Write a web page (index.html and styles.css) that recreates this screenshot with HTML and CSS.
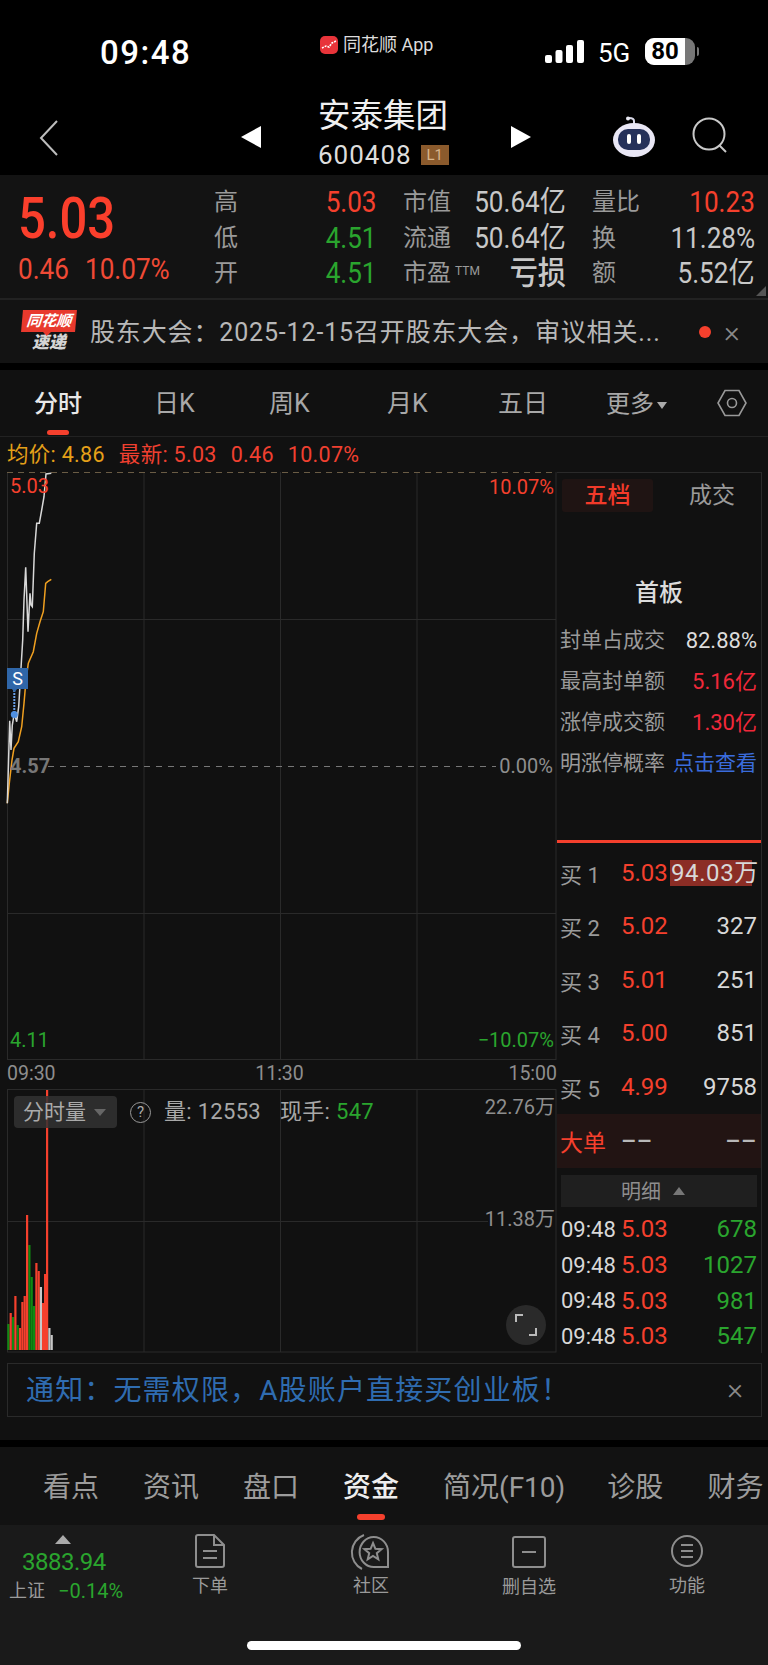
FILE: index.html
```html
<!DOCTYPE html>
<html lang="zh-CN">
<head>
    <meta charset="UTF-8">
    <title>安泰集团 600408</title>
    <link rel="stylesheet" href="styles.css">
</head>
<body>
    <div class="top">
        <div class="status">
            <span class="clock">09:48</span>
            <span class="source">
                <svg class="source-icon" width="18" height="18" viewBox="0 0 18 18"><rect width="18" height="18" rx="5" fill="#e8343a"/><polyline points="2,12 6,10 9,11 12,7 16,5" fill="none" stroke="#fff" stroke-width="1.6" stroke-dasharray="2 1"/></svg>
                同花顺 App
            </span>
            <svg class="signal" width="39" height="23" viewBox="0 0 39 23"><rect x="0" y="15" width="7" height="8" rx="2"/><rect x="10.5" y="10" width="7" height="13" rx="2"/><rect x="21" y="5" width="7" height="18" rx="2"/><rect x="32" y="0" width="7" height="23" rx="2"/></svg>
            <span class="net">5G</span>
            <span class="battery"><span class="battery-fill">80</span></span>
            <span class="battery-tip"></span>
        </div>
        <div class="nav">
            <svg class="back" width="20" height="36" viewBox="0 0 20 36"><polyline points="18,1 2,18 18,35" fill="none" stroke="#bdbdbd" stroke-width="2"/></svg>
            <span class="arrow arrow-left"></span>
            <div class="title">
                <div class="name">安泰集团</div>
                <div class="code">600408<span class="level">L1</span></div>
            </div>
            <span class="arrow arrow-right"></span>
            <svg class="robot" width="44" height="42" viewBox="0 0 44 42">
                <path d="M22 9 V5 Q22 2 17 2" fill="none" stroke="#d9d9e8" stroke-width="2"/>
                <circle cx="16" cy="2.5" r="2" fill="#e8e8f2"/>
                <ellipse cx="22" cy="24" rx="21" ry="17" fill="#e9e7f5"/>
                <rect x="6" y="13" width="32" height="21" rx="10" fill="#25315a"/>
                <rect x="15" y="18" width="4" height="10" rx="2" fill="#fff"/>
                <rect x="25" y="18" width="4" height="10" rx="2" fill="#fff"/>
            </svg>
            <svg class="search" width="36" height="36" viewBox="0 0 36 36"><circle cx="17" cy="17" r="15.5" fill="none" stroke="#c8c8c8" stroke-width="2"/><line x1="27" y1="28" x2="34" y2="35" stroke="#c8c8c8" stroke-width="2"/></svg>
        </div>
    </div>

    <div class="quote">
        <div class="price">
            <div class="price-big">5.03</div>
            <div class="price-change"><span class="narrow-left">0.46</span><span class="narrow-left">10.07%</span></div>
        </div>
        <div class="stats">
            <div class="stat"><span class="stat-label">高</span><span class="narrow up">5.03</span></div>
            <div class="stat"><span class="stat-label">市值</span><span class="narrow">50.64亿</span></div>
            <div class="stat"><span class="stat-label">量比</span><span class="narrow up">10.23</span></div>
            <div class="stat"><span class="stat-label">低</span><span class="narrow down">4.51</span></div>
            <div class="stat"><span class="stat-label">流通</span><span class="narrow">50.64亿</span></div>
            <div class="stat"><span class="stat-label">换</span><span class="narrow">11.28%</span></div>
            <div class="stat"><span class="stat-label">开</span><span class="narrow down">4.51</span></div>
            <div class="stat"><span class="stat-label">市盈<sup class="ttm">TTM</sup></span><span class="narrow stat-loss">亏损</span></div>
            <div class="stat"><span class="stat-label">额</span><span class="narrow">5.52亿</span></div>
        </div>
        <span class="corner"></span>
    </div>

    <div class="news">
        <div class="news-logo">
            <div class="news-logo-top">同花顺</div>
            <div class="news-logo-bottom">速递</div>
        </div>
        <div class="news-text">股东大会：2025-12-15召开股东大会，审议相关...</div>
        <span class="news-dot"></span>
        <span class="news-close">×</span>
    </div>

    <div class="panel">
        <div class="chart-tabs">
            <span class="chart-tab tab-active">分时</span>
            <span class="chart-tab tab-day">日K</span>
            <span class="chart-tab tab-week">周K</span>
            <span class="chart-tab tab-month">月K</span>
            <span class="chart-tab tab-five">五日</span>
            <span class="chart-tab tab-more">更多<i class="more-caret"></i></span>
            <svg class="hex" width="32" height="28" viewBox="0 0 32 28"><polygon points="9,1.5 23,1.5 30,14 23,26.5 9,26.5 2,14" fill="none" stroke="#999" stroke-width="1.6"/><circle cx="16" cy="14" r="4.5" fill="none" stroke="#999" stroke-width="1.6"/></svg>
        </div>
        <div class="legend">
            <span class="avg">均价: 4.86</span>
            <span class="latest">最新: 5.03</span>
            <span class="latest">0.46</span>
            <span class="latest">10.07%</span>
        </div>

        <div class="main">
            <div class="charts">
                <div class="price-chart">
                    <svg class="plot" width="550" height="589" viewBox="7 472 550 589">
                        <g class="grid">
                            <line x1="7.5" y1="472" x2="7.5" y2="1060"/>
                            <line x1="144" y1="472" x2="144" y2="1060"/>
                            <line x1="280.5" y1="472" x2="280.5" y2="1060"/>
                            <line x1="417" y1="472" x2="417" y2="1060"/>
                            <line x1="556" y1="472" x2="556" y2="1060"/>
                            <line x1="7" y1="619.5" x2="556" y2="619.5"/>
                            <line x1="7" y1="913.5" x2="556" y2="913.5"/>
                            <line x1="7" y1="1059.5" x2="556" y2="1059.5"/>
                        </g>
                        <line class="limit" x1="7" y1="472.5" x2="556" y2="472.5"/>
                        <line class="base" x1="48" y1="766.5" x2="496" y2="766.5"/>
                        <polyline class="line-avg" points="7.3,803.3 9.3,783.3 12,760 14,748.3 18.3,741.7 21.7,726.7 24,703.3 26,680 28.3,663.3 33.3,651.7 36.7,633.3 40,621.7 43.3,611.7 45.7,583.3 47.7,581.7 51.3,579.3"/>
                        <polyline class="line-price" points="7.3,803.3 8,780 9.7,720.7 11,750 12.3,725 14.3,713.3 16.7,721.7 18.7,706.7 20.7,673.3 22.7,640 24,600 25.7,567.3 28,631.7 30,593.3 31,605 32.3,606.7 34.3,553.3 36.7,523.3 39.3,523.3 41.7,510 44,496.7 46,474 51.3,473.3"/>
                        <line class="sell-stem" x1="14.3" y1="690" x2="14.3" y2="712"/>
                        <circle class="sell-dot" cx="14.3" cy="714.5" r="3.5"/>
                        <polygon class="sell-tip" points="11,688 18,688 14.5,692"/>
                    </svg>
                    <span class="sell-flag">S</span>
                    <span class="axis axis-top up">5.03</span>
                    <span class="axis axis-pct-top up">10.07%</span>
                    <span class="axis axis-mid">4.57</span>
                    <span class="axis axis-pct-mid">0.00%</span>
                    <span class="axis axis-low down">4.11</span>
                    <span class="axis axis-pct-low down">−10.07%</span>
                </div>
                <div class="times"><span>09:30</span><span class="time-mid">11:30</span><span>15:00</span></div>
                <div class="volume-chart">
                    <svg class="plot" width="550" height="264" viewBox="7 1089 550 264">
                        <g class="grid">
                            <rect x="7.5" y="1089.5" width="548.5" height="262.5" fill="none"/>
                            <line x1="144" y1="1089" x2="144" y2="1352"/>
                            <line x1="280.5" y1="1089" x2="280.5" y2="1352"/>
                            <line x1="417" y1="1089" x2="417" y2="1352"/>
                            <line x1="7" y1="1221.5" x2="488" y2="1221.5"/>
                        </g>
                        <g class="bar-green">
                            <rect x="7.3" y="1324" width="2.2" height="26"/>
                            <rect x="12" y="1317" width="2.2" height="33"/>
                            <rect x="16.6" y="1325" width="2.2" height="25"/>
                            <rect x="28.3" y="1245" width="2.2" height="105"/>
                            <rect x="30.6" y="1277" width="2.2" height="73"/>
                            <rect x="33" y="1306" width="2.2" height="44"/>
                        </g>
                        <g class="bar-red">
                            <rect x="9.6" y="1313" width="2.2" height="37"/>
                            <rect x="14.3" y="1296" width="2.2" height="54"/>
                            <rect x="19" y="1328" width="2.2" height="22"/>
                            <rect x="21.3" y="1302" width="2.2" height="48"/>
                            <rect x="23.6" y="1296" width="2.2" height="54"/>
                            <rect x="26" y="1215" width="2.2" height="135"/>
                            <rect x="35.3" y="1263" width="2.2" height="87"/>
                            <rect x="37.6" y="1271" width="2.2" height="79"/>
                            <rect x="42" y="1303" width="2.2" height="47"/>
                            <rect x="44" y="1274" width="2.2" height="76"/>
                            <rect x="46" y="1090" width="2.2" height="260"/>
                        </g>
                        <g class="bar-grey">
                            <rect x="39.8" y="1287" width="2.2" height="63"/>
                            <rect x="48.3" y="1328" width="2.2" height="22"/>
                            <rect x="50.6" y="1335" width="2.2" height="15"/>
                        </g>
                    </svg>
                    <div class="vol-info">
                        <span class="vol-pill">分时量<i class="pill-caret"></i></span>
                        <span class="vol-help">?</span>
                        <span class="vol-text">量: 12553</span>
                        <span class="vol-text vol-hand">现手: <span class="down">547</span></span>
                    </div>
                    <span class="axis axis-vol-top">22.76万</span>
                    <span class="axis axis-vol-mid">11.38万</span>
                    <span class="expand">
                        <svg width="24" height="24" viewBox="0 0 24 24"><polyline points="2,9 2,2 9,2" fill="none" stroke="#bbb" stroke-width="2"/><polyline points="22,15 22,22 15,22" fill="none" stroke="#bbb" stroke-width="2"/></svg>
                    </span>
                </div>
            </div>

            <div class="side">
                <div class="side-tabs"><span class="side-tab side-on">五档</span><span class="side-tab">成交</span></div>
                <div class="board-title">首板</div>
                <div class="board-row"><span>封单占成交</span><span class="board-white">82.88%</span></div>
                <div class="board-row"><span>最高封单额</span><span class="board-red">5.16亿</span></div>
                <div class="board-row"><span>涨停成交额</span><span class="board-red">1.30亿</span></div>
                <div class="board-row"><span>明涨停概率</span><span class="board-blue">点击查看</span></div>
                <div class="bids">
                    <div class="bid"><span class="bid-name">买 1</span><span class="up">5.03</span><span class="bid-vol bid-hot">94.03万</span></div>
                    <div class="bid"><span class="bid-name">买 2</span><span class="up">5.02</span><span class="bid-vol">327</span></div>
                    <div class="bid"><span class="bid-name">买 3</span><span class="up">5.01</span><span class="bid-vol">251</span></div>
                    <div class="bid"><span class="bid-name">买 4</span><span class="up">5.00</span><span class="bid-vol">851</span></div>
                    <div class="bid"><span class="bid-name">买 5</span><span class="up">4.99</span><span class="bid-vol">9758</span></div>
                </div>
                <div class="big-order"><span class="big-name">大单</span><span class="big-dash">--</span><span class="bid-vol big-dash dash-right">--</span></div>
                <div class="detail-head">明细<i class="detail-caret"></i></div>
                <div class="trade"><span class="trade-time">09:48</span><span class="up">5.03</span><span class="bid-vol down">678</span></div>
                <div class="trade"><span class="trade-time">09:48</span><span class="up">5.03</span><span class="bid-vol down">1027</span></div>
                <div class="trade"><span class="trade-time">09:48</span><span class="up">5.03</span><span class="bid-vol down">981</span></div>
                <div class="trade"><span class="trade-time">09:48</span><span class="up">5.03</span><span class="bid-vol down">547</span></div>
            </div>
        </div>

        <div class="notice">
            <span class="notice-text">通知：无需权限，A股账户直接买创业板！</span>
            <span class="notice-close">×</span>
        </div>
    </div>

    <div class="info-tabs">
        <span class="info-tab">看点</span>
        <span class="info-tab">资讯</span>
        <span class="info-tab">盘口</span>
        <span class="info-tab info-on">资金</span>
        <span class="info-tab info-f10">简况(F10)</span>
        <span class="info-tab">诊股</span>
        <span class="info-tab">财务</span>
    </div>

    <div class="toolbar">
        <div class="index">
            <span class="index-arrow"></span>
            <div class="index-value">3883.94</div>
            <div class="index-line"><span class="index-name">上证</span><span>−0.14%</span></div>
        </div>
        <div class="tool tool-order">
            <svg width="32" height="34" viewBox="0 0 32 34"><path d="M2 3 Q2 1 4 1 H20 L30 11 V31 Q30 33 28 33 H4 Q2 33 2 31 Z M20 1 V11 H30" fill="none"/><line x1="9" y1="17" x2="23" y2="17"/><line x1="9" y1="24" x2="23" y2="24"/></svg>
            <span>下单</span>
        </div>
        <div class="tool tool-community">
            <svg width="38" height="36" viewBox="0 0 38 36"><path d="M36 33 H22 A14.200 15 0 1 1 36 18 Z" fill="none"/><path d="M12 1 A18.600 18.600 0 0 0 10 35" fill="none"/><polygon points="21,9 23.400,14.800 29.600,15.200 24.800,19.200 26.300,25.300 21,22 15.700,25.300 17.200,19.200 12.400,15.200 18.600,14.800" fill="none"/></svg>
            <span>社区</span>
        </div>
        <div class="tool tool-remove">
            <svg width="34" height="32" viewBox="0 0 34 32"><rect x="1" y="1" width="32" height="30" rx="2" fill="none"/><line x1="10" y1="16" x2="24" y2="16"/></svg>
            <span>删自选</span>
        </div>
        <div class="tool tool-more">
            <svg width="32" height="34" viewBox="0 0 32 34"><circle cx="16" cy="17" r="15" fill="none"/><line x1="10" y1="11" x2="22" y2="11"/><line x1="10" y1="17" x2="22" y2="17"/><line x1="10" y1="23" x2="22" y2="23"/></svg>
            <span>功能</span>
        </div>
        <span class="home-bar"></span>
    </div>
</body>
</html>
```

FILE: styles.css
```css
* { box-sizing: border-box; }
html, body { margin: 0; padding: 0; }
body { width: 768px; height: 1665px; overflow: hidden; background: #000; color: #d0d0d0; font-family: Roboto, "Noto Sans CJK SC", sans-serif; }
i { display: inline-block; font-style: normal; }

/* status + nav */
.top { height: 175px; background: #000; color: #fff; }
.status { height: 90px; display: flex; align-items: flex-start; position: relative; }
.clock { margin: 32px 0 0 100px; width: 220px; font-size: 33px; font-weight: 500; line-height: 41px; letter-spacing: 1.5px; }
.source { display: flex; align-items: center; gap: 5px; margin-top: 36px; width: 225px; font-size: 18px; line-height: 18px; color: #ddd; }
.signal { margin-top: 40px; fill: #fff; }
.net { margin: 38px 0 0 14px; width: 47px; font-size: 26px; line-height: 30px; }
.battery { margin-top: 38px; width: 50px; height: 27px; border-radius: 9px; background: #777; overflow: hidden; }
.battery-fill { display: block; width: 40px; height: 27px; background: #fff; color: #000; font-size: 24px; font-weight: 700; line-height: 27px; text-align: center; }
.battery-tip { margin: 47px 0 0 2px; width: 2px; height: 9px; border-radius: 0 2px 2px 0; background: #777; }

.nav { height: 85px; display: flex; align-items: center; position: relative; }
.back { margin: 10px 0 0 39px; }
.arrow { width: 0; height: 0; margin-top: 8px; border-top: 11px solid transparent; border-bottom: 11px solid transparent; }
.arrow-left { margin-left: 182px; border-right: 20px solid #fff; }
.arrow-right { margin-left: 60px; border-left: 20px solid #fff; }
.title { margin: 4px 0 0 57px; width: 133px; }
.name { font-size: 32.500px; line-height: 42px; color: #f0f0f0; margin-top: -4px; }
.code { display: flex; align-items: center; margin-top: 3px; font-size: 26px; letter-spacing: 1px; line-height: 30px; color: #ddd; }
.level { margin-left: 9px; width: 28px; height: 20px; background: #8b5a2c; color: #d8b48a; font-size: 15px; letter-spacing: 0; line-height: 20px; text-align: center; }
.robot { margin: 8px 0 0 81px; }
.search { margin: 4px 0 0 36px; }

/* quote */
.quote { height: 125px; display: flex; position: relative; background: #131313; border-bottom: 2px solid #222; }
.price { width: 214px; padding-left: 18px; }
.price-big { margin-top: 14px; font-size: 57px; font-weight: 500; line-height: 60px; color: #fb3f2c; transform: scaleX(.86); transform-origin: left center; }
.price-change { display: flex; gap: 8px; margin-top: 2px; font-size: 30px; line-height: 36px; color: #f04a36; }
.narrow-left { display: inline-block; transform: scaleX(.87); transform-origin: left center; }
.stats { display: grid; grid-template-columns: repeat(3, 163px); column-gap: 26px; grid-auto-rows: 35.5px; padding-top: 10px; font-size: 29px; color: #c8c8c8; }
.stat { display: flex; justify-content: space-between; align-items: center; line-height: 35px; white-space: nowrap; }
.stat-label { font-size: 24px; color: #9a9a9a; }
.narrow { display: inline-block; transform: scaleX(.9); transform-origin: right center; }
.stat-loss { font-size: 32px; font-weight: 500; transform: scaleX(.88); }
.ttm { margin-left: 4px; font-size: 12px; vertical-align: 6px; line-height: 0; }
.corner { position: absolute; right: 2px; bottom: 2px; width: 0; height: 0; border-left: 10px solid transparent; border-bottom: 10px solid #555; }

/* news */
.news { height: 63px; display: flex; align-items: center; background: #131313; }
.news-logo { margin-left: 22px; width: 54px; text-align: center; position: relative; }
.news-logo-top { height: 22px; background: #e8392d; color: #fff; font-size: 15px; font-weight: 700; font-style: italic; line-height: 22px; transform: skewX(-5deg); }
.news-logo-top::after { content: ""; position: absolute; left: 22px; top: 22px; border-left: 4px solid transparent; border-right: 4px solid transparent; border-top: 4px solid #e8392d; }
.news-logo-bottom { color: #d5d5d5; font-size: 17px; font-weight: 900; font-style: italic; line-height: 21px; }
.news-text { margin: -3px 0 0 14px; width: 609px; font-size: 25px; letter-spacing: .85px; color: #b8b8b8; white-space: nowrap; }
.news-dot { width: 12px; height: 12px; border-radius: 50%; background: #f5402d; }
.news-close { margin-left: 13px; font-size: 30px; font-weight: 300; line-height: 30px; color: #8a8a8a; }

/* chart panel */
.panel { margin-top: 7px; height: 1070px; background: #111; }
.chart-tabs { height: 67px; position: relative; border-bottom: 1px solid #222; font-size: 25px; color: #a8a8a8; }
.chart-tab { position: absolute; top: 17px; line-height: 34px; white-space: nowrap; }
.tab-active { left: 34px; color: #e8e8e8; font-weight: 500; font-size: 24px; }
.tab-active::after { content: ""; position: absolute; left: 13px; top: 43px; width: 22px; height: 5px; border-radius: 3px; background: #f5402d; }
.tab-day { left: 154px; }
.tab-week { left: 269px; }
.tab-month { left: 387px; }
.tab-five { left: 498px; }
.tab-more { left: 606px; font-size: 24px; }
.more-caret { margin: 0 0 3px 3px; border-left: 5px solid transparent; border-right: 5px solid transparent; border-top: 7px solid #aaa; }
.hex { position: absolute; left: 716px; top: 19px; }

.legend { height: 35px; display: flex; gap: 14px; padding: 3px 0 0 7px; font-size: 21.500px; line-height: 30px; letter-spacing: .3px; color: #f04030; white-space: nowrap; }
.avg { color: #e5a019; }

.main { height: 881px; display: flex; padding-left: 7px; }
.charts { width: 550px; }
.price-chart { height: 588px; position: relative; }
.plot { position: absolute; left: 0; top: 0; overflow: visible; }
.grid line, .grid rect { stroke: #2a2a2a; stroke-width: 1; }
.limit { stroke: #6a5c45; stroke-width: 1; stroke-dasharray: 6 5; }
.base { stroke: #777; stroke-width: 1; stroke-dasharray: 6 6; }
.line-price { fill: none; stroke: #d8d8d8; stroke-width: 1.5; }
.line-avg { fill: none; stroke: #f0a020; stroke-width: 1.5; }
.sell-stem { stroke: #6aa0e8; stroke-width: 2; stroke-dasharray: 2 1; }
.sell-dot { fill: #4f8fe0; }
.sell-tip { fill: #2f66a8; }
.sell-flag { position: absolute; left: 0; top: 196px; width: 21px; height: 21px; background: #2f66a8; color: #fff; font-size: 18px; line-height: 21px; text-align: center; }
.axis { position: absolute; font-size: 20px; line-height: 24px; color: #8e8e8e; white-space: nowrap; }
.axis-top { left: 3px; top: 2px; }
.axis-pct-top { right: 3px; top: 3px; }
.axis-mid { left: 3px; top: 282px; font-weight: 700; color: #777; }
.axis-pct-mid { right: 4px; top: 282px; }
.axis-low { left: 3px; top: 556px; }
.axis-pct-low { right: 3px; top: 556px; }
.times { height: 29px; display: flex; justify-content: space-between; font-size: 19.500px; line-height: 27px; color: #8e8e8e; }
.time-mid { margin-left: -5px; }
.volume-chart { height: 264px; position: relative; }
.bar-green rect { fill: #108a12; }
.bar-red rect { fill: #f5402d; }
.bar-grey rect { fill: #c8c8c8; }
.vol-info { position: relative; display: flex; align-items: center; padding: 7px 0 0 7px; font-size: 22px; line-height: 32px; color: #a8a8a8; white-space: nowrap; }
.vol-pill { display: flex; align-items: center; width: 103px; height: 32px; padding-left: 9px; border-radius: 4px; background: rgba(50, 50, 50, .85); font-size: 21px; color: #aaa; }
.pill-caret { margin-left: 8px; border-left: 6px solid transparent; border-right: 6px solid transparent; border-top: 7px solid #666; }
.vol-help { margin: 0 13px 0 13px; width: 21px; height: 21px; border: 1.5px solid #999; border-radius: 50%; font-size: 15px; line-height: 18px; text-align: center; color: #aaa; }
.vol-text { letter-spacing: .3px; }
.vol-hand { margin-left: 19px; }
.axis-vol-top { right: 2px; top: 6px; }
.axis-vol-mid { right: 2px; top: 118px; }
.expand { position: absolute; left: 499px; top: 216px; width: 40px; height: 40px; display: flex; align-items: center; justify-content: center; border-radius: 50%; background: #2a2a2a; }

/* right column */
.side { width: 205px; height: 881px; padding-top: 6px; border-top: 1px solid #2a2a2a; border-right: 1px solid #2a2a2a; }
.side-tabs { height: 33px; display: flex; padding-left: 5px; font-size: 23px; line-height: 33px; color: #9a9a9a; }
.side-tab { width: 91px; text-align: center; }
.side-tab + .side-tab { margin-left: 19px; width: 80px; }
.side-on { border-radius: 3px; background: #1f1413; color: #f23a2a; font-weight: 500; }
.board-title { height: 48px; margin-top: 57px; text-align: center; font-size: 24px; font-weight: 500; line-height: 48px; color: #dcdcdc; margin-bottom: 3px; }
.board-row { height: 41px; display: flex; justify-content: space-between; padding: 0 4px 0 3px; font-size: 21px; line-height: 41px; color: #9a9a9a; white-space: nowrap; }
.board-white { color: #dcdcdc; font-size: 22px; }
.board-red { color: #f0283a; font-size: 22px; }
.board-blue { color: #3a6cdc; }
.bids { margin-top: 56px; padding-top: 3px; border-top: 3px solid #f5402d; }
.bid { height: 53.5px; display: flex; align-items: center; padding: 0 4px 0 3px; font-size: 24px; white-space: nowrap; }
.bid-name { width: 61px; font-size: 22px; color: #9a9a9a; }
.bid-vol { margin-left: auto; color: #d8d8d8; }
.bid-hot { width: 87px; height: 26px; padding-left: 1px; line-height: 26px; letter-spacing: .6px; background: linear-gradient(#8b2d25, #8b2d25) no-repeat left / 82px 26px; }
.big-order { height: 54px; display: flex; align-items: center; padding: 0 4px 0 3px; background: #221413; font-size: 23px; white-space: nowrap; }
.big-name { width: 61px; color: #f5402d; }
.big-dash { font-weight: 500; color: #b8b8b8; transform: scaleX(2); transform-origin: left center; }
.dash-right { transform-origin: right center; }
.detail-head { height: 32px; margin: 7px 4px 5px; display: flex; align-items: center; justify-content: center; background: #1f1f1f; font-size: 20px; color: #8e8e8e; padding-right: 12px; }
.detail-caret { margin-left: 12px; border-left: 6px solid transparent; border-right: 6px solid transparent; border-bottom: 8px solid #777; }
.trade { height: 35.7px; display: flex; align-items: center; padding: 0 4px; font-size: 24px; white-space: nowrap; }
.trade-time { width: 60px; font-size: 22px; color: #d8d8d8; }

.notice { height: 54px; margin: 10px 6px 0 7px; display: flex; align-items: center; justify-content: space-between; padding: 0 18px 4px; border: 1px solid #2a2a2a; color: #2f6cb0; font-size: 28px; letter-spacing: 1.150px; white-space: nowrap; }
.notice-close { font-size: 30px; font-weight: 300; color: #8a8a8a; margin-right: -1px; }

/* lower tabs */
.info-tabs { height: 78px; margin-top: 7px; position: relative; display: flex; padding-left: 43px; background: #121212; font-size: 28px; line-height: 82px; color: #9c9c9c; white-space: nowrap; overflow: hidden; }
.info-tab { margin-right: 44px; }
.info-f10 { margin-right: 42px; }
.info-on { position: relative; color: #eee; font-weight: 500; }
.info-on::after { content: ""; position: absolute; left: 14px; bottom: 5px; width: 28px; height: 6px; border-radius: 3px; background: #f5402d; }

.toolbar { height: 140px; position: relative; display: flex; background: #1a1a1a; }
.index { width: 170px; padding: 10px 0 0 9px; }
.index-arrow { display: block; margin-left: 46px; width: 0; height: 0; border-left: 8px solid transparent; border-right: 8px solid transparent; border-bottom: 9px solid #aaa; }
.index-value { margin: 3px 0 0 13px; font-size: 24px; letter-spacing: -.5px; line-height: 30px; color: #2aa52e; }
.index-line { display: flex; gap: 13px; font-size: 20px; line-height: 28px; color: #2aa52e; }
.index-name { font-size: 18px; color: #9a9a9a; }
.tool { position: absolute; top: 9px; display: flex; flex-direction: column; align-items: center; font-size: 18px; line-height: 26px; color: #9a9a9a; }
.tool svg { stroke: #8e8e8e; stroke-width: 2; margin-bottom: 5px; overflow: visible; }
.tool-order { left: 190px; width: 40px; }
.tool-community { left: 351px; width: 40px; }
.tool-community svg { margin-bottom: 3px; }
.tool-remove { left: 499px; width: 60px; top: 11px; }
.tool-remove svg { margin-bottom: 6px; }
.tool-more { left: 667px; width: 40px; }
.home-bar { position: absolute; left: 247px; top: 116px; width: 274px; height: 9px; border-radius: 5px; background: #fff; }

/* price colours, last so they win over the plain text rules above */
.up { color: #f5402d; }
.down { color: #2aa52e; }
```
